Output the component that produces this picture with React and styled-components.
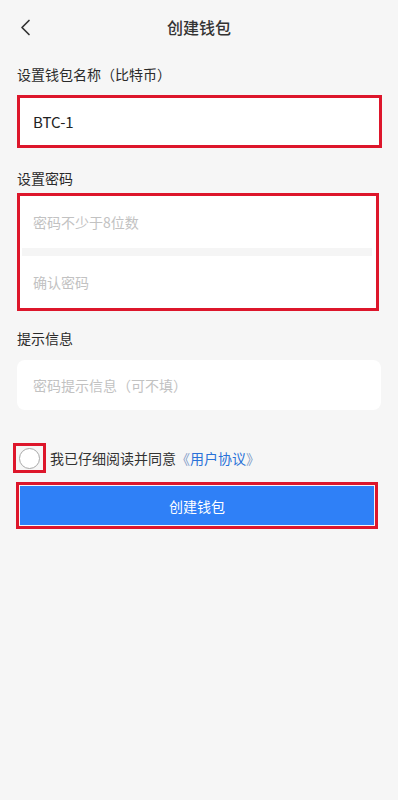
import React from "react";
import styled, { createGlobalStyle } from "styled-components";

const GlobalStyle = createGlobalStyle`
  * { box-sizing: border-box; }
  body {
    margin: 0;
    background: #f6f6f6;
    font-family: "Noto Sans CJK SC", "Noto Sans", sans-serif;
    color: #333;
  }
`;

const Page = styled.div`
  min-height: 100vh;
  background: #f6f6f6;
`;

const Header = styled.div`
  height: 54px;
  display: grid;
  grid-template-columns: 60px 1fr 60px;
  align-items: center;
`;

const BackButton = styled.button`
  background: none;
  border: none;
  padding: 0 0 0 20px;
  height: 54px;
  display: flex;
  align-items: center;
  cursor: pointer;
`;

const Title = styled.div`
  text-align: center;
  font-size: 16px;
  font-weight: 500;
  color: #333;
  line-height: 22px;
`;

const Form = styled.div`
  padding: 0 16px 0 17px;
  display: flex;
  flex-direction: column;
`;

const Label = styled.div`
  font-size: 14px;
  line-height: 20px;
  color: #2a2a2a;
  margin-top: ${(p) => p.$top}px;
`;

const Marked = styled.div`
  border: 3px solid #dd162b;
  background: #fff;
  margin-top: ${(p) => p.$top}px;
  margin-right: ${(p) => p.$right || 0}px;
`;

const Row = styled.div`
  height: ${(p) => p.$h}px;
  display: flex;
  align-items: center;
  padding-left: 13px;
  font-size: ${(p) => (p.$filled ? 15 : 14)}px;
  color: ${(p) => (p.$filled ? "#222" : "#c2c2c2")};
`;

const Divider = styled.div`
  height: 8px;
  background: #f5f5f5;
  margin: 0 4px 0 2px;
`;

const HintBox = styled.div`
  margin-top: 12px;
  margin-right: 1px;
  height: 50px;
  background: #fff;
  border-radius: 8px;
  display: flex;
  align-items: center;
  padding-left: 16px;
  font-size: 14px;
  color: #c2c2c2;
`;

const AgreeRow = styled.div`
  margin-top: 33px;
  margin-left: -4px;
  height: 30px;
  display: flex;
  align-items: center;
  gap: 4px;
  font-size: 14px;
  color: #333;
`;

const CheckFrame = styled.div`
  width: 33px;
  height: 30px;
  border: 3px solid #dd162b;
  display: flex;
  align-items: center;
  justify-content: center;
`;

const Circle = styled.div`
  width: 21px;
  height: 21px;
  border-radius: 50%;
  border: 1px solid #a8a8a8;
  background: #fff;
`;

const Link = styled.span`
  color: #2a72d8;
`;

const Bracket = styled.span`
  color: #7f9cc8;
`;

const SubmitFrame = styled.div`
  margin-top: 9px;
  margin-left: -1px;
  margin-right: 4px;
  height: 47px;
  border: 3px solid #dd162b;
  padding: 1px;
  background: #f6f6f6;
`;

const SubmitButton = styled.button`
  width: 100%;
  height: 100%;
  border: none;
  background: #2f80f7;
  color: #fff;
  font-family: inherit;
  font-size: 14px;
  cursor: pointer;
`;

function BackIcon() {
  return (
    <svg width="11" height="17" viewBox="0 0 11 17">
      <path d="M9 1.5 L2 8.5 L9 15.5" fill="none" stroke="#333" strokeWidth="1.7" strokeLinecap="round" strokeLinejoin="round" />
    </svg>
  );
}

export default function App() {
  return (
    <Page>
      <GlobalStyle />
      <Header>
        <BackButton>
          <BackIcon />
        </BackButton>
        <Title>创建钱包</Title>
        <div />
      </Header>

      <Form>
        <Label $top={10}>设置钱包名称（比特币）</Label>
        <Marked $top={11}>
          <Row $h={47} $filled>BTC-1</Row>
        </Marked>

        <Label $top={20}>设置密码</Label>
        <Marked $top={5} $right={3}>
          <Row $h={52}>密码不少于8位数</Row>
          <Divider />
          <Row $h={52}>确认密码</Row>
        </Marked>

        <Label $top={17}>提示信息</Label>
        <HintBox>密码提示信息（可不填）</HintBox>

        <AgreeRow>
          <CheckFrame>
            <Circle />
          </CheckFrame>
          <span>
            我已仔细阅读并同意
            <Bracket>《</Bracket>
            <Link>用户协议</Link>
            <Bracket>》</Bracket>
          </span>
        </AgreeRow>

        <SubmitFrame>
          <SubmitButton>创建钱包</SubmitButton>
        </SubmitFrame>
      </Form>
    </Page>
  );
}
